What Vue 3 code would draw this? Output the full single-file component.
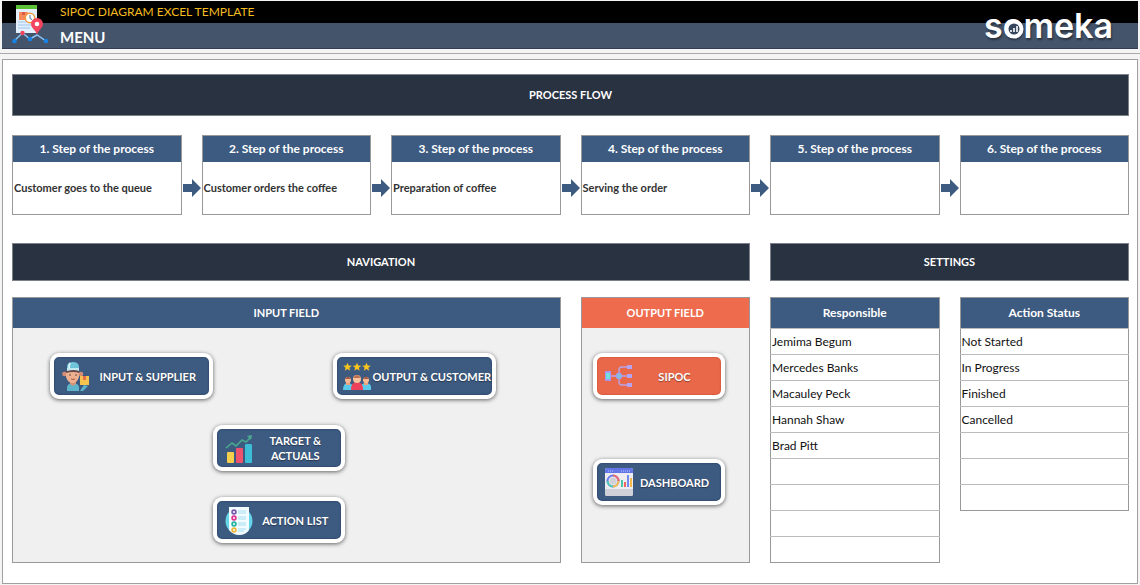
<script setup>
const steps = [
  'Customer goes to the queue',
  'Customer orders the coffee',
  'Preparation of coffee',
  'Serving the order',
  '',
  '',
]
const lists = [
  { title: 'Responsible', rows: ['Jemima Begum', 'Mercedes Banks', 'Macauley Peck', 'Hannah Shaw', 'Brad Pitt', '', '', '', ''] },
  { title: 'Action Status', rows: ['Not Started', 'In Progress', 'Finished', 'Cancelled', '', '', ''] },
]
const star = 'M0-5 1.4-1.7 5-1.5 2.2.8 3.1 4.3 0 2.3-3.1 4.3-2.2.8-5-1.5-1.4-1.7Z'
</script>

<template>
  <div class="page">
    <header class="top">
      <svg class="mark" viewBox="0 0 38 42" aria-hidden="true">
        <path d="M4 2h21v27H4z" fill="#e3effc" />
        <path d="M4 1h21v4H4z" fill="#5cc036" />
        <path d="M7 8h9v8H7z" fill="#f58a5c" />
        <path d="M10 8h3v3h-3z" fill="#d85d48" />
        <path d="M6 18h9M6 21h13M6 24h12" stroke="#9cc5ee" stroke-width="1" />
        <circle cx="18" cy="14" r="4.7" fill="#fff" stroke="#ef9a3d" stroke-width="1.5" />
        <path d="M18 11v3.500l2 1" fill="none" stroke="#53729b" stroke-width="1" />
        <path d="M2 37 10.500 29 18 35 25 31 34 37" fill="none" stroke="#8ac3f5" stroke-width="1.500" />
        <path d="M25 31C24 26 19 24 19 20a6 6 0 0 1 12 0c0 4-5 6-6 11Z" fill="#f2455f" />
        <circle cx="25" cy="20" r="2.300" fill="#fff" />
        <circle cx="2.500" cy="37" r="2.300" fill="#1683e5" />
        <circle cx="10.500" cy="29" r="2.200" fill="#f2455f" />
        <circle cx="18" cy="35" r="2.300" fill="#1683e5" />
        <circle cx="34" cy="37" r="2.300" fill="#1683e5" />
      </svg>
      <div class="titles">
        <p class="product">SIPOC DIAGRAM EXCEL TEMPLATE</p>
        <h1>MENU</h1>
      </div>
      <div class="brand">s<span class="brand-o">o<svg viewBox="0 0 20 20" aria-hidden="true">
        <circle cx="10" cy="10" r="7.500" fill="#35455c" stroke="#fff" stroke-width="4" />
        <path d="M7 13v-2M10 13V9M13 13V7" stroke="#fff" stroke-width="1.600" />
      </svg></span>meka</div>
    </header>
    <div class="rule"></div>

    <main class="sheet">
      <h2 class="bar flow-title">PROCESS FLOW</h2>

      <section v-for="(text, i) in steps" :key="i" class="step">
        <h3>{{ i + 1 }}. Step of the process</h3>
        <p>{{ text }}</p>
        <svg v-if="i < 5" class="arrow" viewBox="0 0 18 18" aria-hidden="true">
          <path d="M0 5h9V0l9 9-9 9v-5H0Z" fill="#3d5a80" />
        </svg>
      </section>

      <h2 class="bar nav-title">NAVIGATION</h2>
      <h2 class="bar set-title">SETTINGS</h2>

      <section class="field input-field">
        <h3>INPUT FIELD</h3>
        <div class="input-body">
          <button type="button" class="tile first">
            <svg viewBox="0 0 28 30" aria-hidden="true">
              <path d="M5 30v-4q1-4 6-4t6 4v4Z" fill="#5eb4cb" />
              <path d="M8 18h6v5l-3 2-3-2Z" fill="#d49478" />
              <circle cx="2.500" cy="13" r="2.300" fill="#d78d73" /><circle cx="19" cy="13" r="2.300" fill="#d78d73" />
              <path d="M4 9h13v7q-2 6-6.500 6T4 16Z" fill="#efb08f" />
              <path d="M4 9h13v3q-5-2-13 0Z" fill="#684a4a" />
              <path d="M5 9V5q1-4 6-4t6 4v4Z" fill="#6fc4da" /><path d="M5 7h12v3q-5-2-12 0Z" fill="#c2eaf1" />
              <path d="M8 2q-1 2-1 5" stroke="#d4f3f7" stroke-width="2" fill="none" />
              <circle cx="8" cy="14" r=".8" fill="#4f3d3d" /><circle cx="14" cy="14" r=".8" fill="#4f3d3d" />
              <path d="M9 18q2 1 4 0" stroke="#a95543" fill="none" />
              <path d="m18 30 4-6 4 1-5 5Z" fill="#5eb4cb" />
              <path d="M18 15h9v9h-9z" fill="#f7c34f" /><path d="M21 15h3v4h-3z" fill="#e96d4b" />
            </svg>
            <span>INPUT &amp; SUPPLIER</span>
          </button>
          <button type="button" class="tile second">
            <svg viewBox="0 0 28 30" aria-hidden="true">
              <path v-for="x in [4.5, 14, 23.5]" :key="x" :d="star" :transform="`translate(${x} 6) scale(.85)`" fill="#fac51c" />
              <path d="M0 29q0-7 5-7t6 7ZM17 29q0-7 6-7t5 7Z" fill="#5bc9e9" />
              <path d="M3 20h4v4H3zM21 20h4v4h-4z" fill="#eaa27f" />
              <circle cx="5" cy="19" r="3" fill="#f8b995" /><circle cx="23" cy="19" r="3" fill="#f8b995" />
              <path d="M2 18q3-5 6 0ZM20 18q3-5 6 0Z" fill="#a65d48" />
              <path d="M8 29q0-8 6-8t6 8Z" fill="#ed405b" />
              <circle cx="14" cy="18" r="4" fill="#fac39d" /><path d="M10 17q4-6 8 0Z" fill="#bb7050" />
            </svg>
            <span>OUTPUT &amp; CUSTOMER</span>
          </button>
          <button type="button" class="tile small third">
            <svg viewBox="0 0 28 30" aria-hidden="true">
              <rect x="2" y="19" width="7" height="11" rx="1" fill="#f8cf4c" />
              <rect x="11" y="15" width="7" height="15" rx="1" fill="#ef526c" />
              <rect x="20" y="11" width="7" height="19" rx="1" fill="#3dbcd6" />
              <path d="m1 15 6-5 4 3 6-6 4 2 5-5" stroke="#48a98f" stroke-width="1.600" fill="none" />
              <path d="m22 3 5-1-1 5Z" fill="#48a98f" />
            </svg>
            <span>TARGET &amp;<br>ACTUALS</span>
          </button>
          <button type="button" class="tile small fourth">
            <svg viewBox="0 0 28 30" aria-hidden="true">
              <circle cx="14" cy="16" r="13.500" fill="#65d4e7" />
              <path d="M4 2h20v23q-3 5-10 5-6 0-10-5Z" fill="#f2fbff" />
              <path d="M13 6h8M13 8h8M13 12h8M13 14h8M13 18h8M13 20h8M13 24h8M13 26h6" stroke="#a4dff0" stroke-width="1.200" />
              <g fill="none" stroke-width="1.700">
                <circle cx="9" cy="7" r="1.900" stroke="#7857ad" /><circle cx="9" cy="13" r="1.900" stroke="#df338f" />
                <circle cx="9" cy="19" r="1.900" stroke="#22b4a0" /><circle cx="9" cy="25" r="1.900" stroke="#edb735" />
              </g>
            </svg>
            <span>ACTION LIST</span>
          </button>
        </div>
      </section>

      <section class="field output-field">
        <h3>OUTPUT FIELD</h3>
        <div class="output-body">
          <button type="button" class="tile small orange">
            <svg viewBox="0 0 28 30" aria-hidden="true">
              <path d="M5 15h17M14 15V9q0-3 3-3h5M14 15v6q0 3 3 3h5" stroke="#b9a4e5" stroke-width="1.400" fill="none" />
              <path d="M0 10h6v10H0z" fill="#a997ee" /><path d="M1 12h4v6H1z" fill="#72dfe4" />
              <circle cx="14" cy="15" r="3" fill="#83bedd" stroke="#a997ee" />
              <path d="M22 4h5v4h-5zM22 13h5v4h-5zM22 22h5v4h-5z" fill="#b6a4f3" />
            </svg>
            <span>SIPOC</span>
          </button>
          <button type="button" class="tile small">
            <svg viewBox="0 0 28 30" aria-hidden="true">
              <rect x="0" y="1" width="28" height="28" rx="2" fill="#ededf1" />
              <path d="M0 6V3q0-2 2-2h24q2 0 2 2v3Z" fill="#6276e8" /><path d="M0 22h28v5q0 2-2 2H2q-2 0-2-2Z" fill="#d0d1d8" />
              <path d="M3 4h6M16 4h9" stroke="#bfc9ff" stroke-dasharray="1 1" />
              <circle cx="8" cy="14" r="3.500" fill="#d0d1d8" />
              <g fill="none" stroke-width="2"><circle cx="8" cy="14" r="5.500" stroke="#6b7af0" /><path d="M8 8.500a5.500 5.500 0 0 1 5.500 5.500" stroke="#ee6d6d" /><path d="M13.500 14a5.500 5.500 0 0 1-5.500 5.500" stroke="#f5c04b" /><path d="M2.500 14a5.500 5.500 0 0 0 5.500 5.500" stroke="#50c9b0" /></g>
              <path d="M17 13v7" stroke="#4ac6a4" stroke-width="2" /><path d="M20 15v5" stroke="#ee665f" stroke-width="2" /><path d="M23 8v12" stroke="#748af4" stroke-width="2" /><path d="M26 11v9" stroke="#f3b94a" stroke-width="2" />
            </svg>
            <span>DASHBOARD</span>
          </button>
        </div>
      </section>

      <table v-for="list in lists" :key="list.title" class="list">
        <thead><tr><th scope="col">{{ list.title }}</th></tr></thead>
        <tbody>
          <tr v-for="(row, i) in list.rows" :key="i"><td>{{ row }}</td></tr>
        </tbody>
      </table>
    </main>
  </div>
</template>

<style>
body { margin: 0; background: #f4f4f4; }
</style>

<style scoped>
* { box-sizing: border-box; }
.page { font-family: Lato, "Open Sans", sans-serif; padding: 1px 2px; color: #222; }
h1, h2, h3, p { margin: 0; }
.top {
  display: flex;
  height: 48px;
  padding: 0 25px 0 10px;
  background: linear-gradient(#000 22px, #44546a 22px);
  border-bottom: 1px solid #333f50;
}
.mark { width: 38px; height: 42px; margin-top: 3px; }
.titles { margin-left: 10px; flex: 1; }
.product { font-size: 12px; line-height: 22px; color: #f5bd1f; }
h1 { font-size: 15px; line-height: 28px; font-weight: 700; color: #fff; }
.brand {
  font: 600 34px/50px Inter, sans-serif;
  color: #fff;
  text-shadow: 1px 2px 2px #0006;
}
.brand-o { position: relative; }
.brand-o svg { position: absolute; width: 20px; height: 20px; left: 1px; top: 14px; }
.rule { height: 5px; margin: 0 -2px 5px; border-bottom: 1px solid #aaa; }
.sheet {
  display: grid;
  grid-template-columns: repeat(6, minmax(0, 1fr));
  column-gap: 20px;
  align-items: start;
  padding: 14px 8px 20px 9px;
  background: #fff;
  border: 1px solid #a0a0a0;
}
.bar {
  background: #293241;
  border: 1px solid #7d828a;
  color: #fff;
  font-size: 11px;
  font-weight: 700;
  text-align: center;
}
.flow-title { grid-column: 1 / -1; line-height: 40px; margin-bottom: 19px; }
.nav-title { grid-column: span 4; line-height: 36px; }
.set-title { grid-column: span 2; line-height: 36px; }
.nav-title, .set-title { margin-bottom: 16px; }
.step { position: relative; border: 1px solid #999; margin-bottom: 28px; }
h3, th {
  background: #3d5a80;
  color: #fff;
  font-size: 12px;
  font-weight: 700;
  text-align: center;
}
.step h3 { line-height: 26px; }
.step p { height: 52px; padding-left: 1px; font-size: 11px; line-height: 52px; font-weight: 700; color: #333; }
.arrow { position: absolute; left: calc(100% + 2px); top: 43px; width: 18px; height: 18px; }
.field { border: 1px solid #999; background: #f0f0f0; align-self: stretch; }
.field h3 { font-size: 11px; }
.field h3, th { line-height: 30px; }
.input-field { grid-column: span 3; }
.output-field h3 { background: #ee6c4d; }
.input-body {
  display: grid;
  grid-template-columns: 163px 120px 163px;
  justify-content: center;
  row-gap: 26px;
  padding: 25px 26px 0 0;
}
.second { grid-column: 3; }
.third, .fourth { grid-column: 2; }
.output-body { display: grid; gap: 60px; padding: 25px 11px; }
.tile {
  display: flex;
  align-items: center;
  width: 163px;
  height: 46px;
  padding: 0 4px 0 8px;
  border: 4px solid #fff;
  border-radius: 9px;
  background: #3d5a80;
  box-shadow: 0 1px 4px #0009, inset 0 0 2px #1d355a;
  color: #fff;
  font: 700 11px/15px Lato, sans-serif;
  text-shadow: 0 1px 1px #0006;
}
.tile svg { flex: none; width: 28px; height: 30px; }
.tile span { flex: 1; text-align: center; white-space: nowrap; }
.tile.second { padding: 0 0 0 6px; }
.tile.small { width: 132px; }
.orange { background: #e9684a; box-shadow: 0 1px 4px #0009, inset 0 0 2px #b84428; }
.list { border-collapse: collapse; width: 100%; border: 1px solid #999; }
th, td { padding: 0; height: 26px; border-bottom: 1px solid #bbb; }
tr:last-child td { border-bottom-color: #999; }
td { padding-left: 1px; font-size: 12px; line-height: 25px; color: #111; }
</style>
